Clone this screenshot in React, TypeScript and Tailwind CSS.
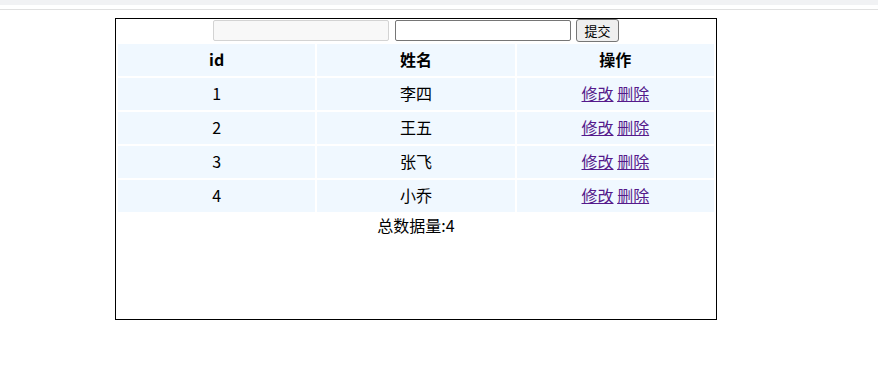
import React from 'react';

const rows = [
  { id: 1, name: '李四' },
  { id: 2, name: '王五' },
  { id: 3, name: '张飞' },
  { id: 4, name: '小乔' },
];

export default function App() {
  return (
    <div className="w-[878px] h-[366px] bg-white relative" style={{ fontFamily: '"Microsoft YaHei", "Noto Sans CJK SC", sans-serif' }}>
      {/* browser chrome remnants */}
      <div className="h-[5px] bg-[#f1f2f4]" />
      <div className="h-[4px]" />
      <div className="h-px bg-[#e0e0e0]" />

      {/* main box */}
      <div className="ml-[115px] mt-[8px] w-[602px] h-[302px] border border-black text-[16px] text-black">
        <div className="flex items-center justify-center h-[23px]">
          <input
            disabled
            className="w-[176px] h-[21px] bg-[#f8f8f8] border border-[#d3d3d3] rounded-[2px]"
          />
          <input className="ml-[6px] w-[176px] h-[21px] bg-white border border-[#767676] rounded-[2px] outline-none" />
          <button className="ml-[5px] w-[43px] h-[23px] bg-[#efefef] border border-[#767676] rounded-[3px] text-[13px] leading-none">
            提交
          </button>
        </div>

        <table className="w-full border-separate border-spacing-[2px] table-fixed">
          <thead>
            <tr>
              <th className="h-[32px] p-0 pb-[2px] bg-[#f0f8ff] font-bold">id</th>
              <th className="h-[32px] p-0 pb-[2px] bg-[#f0f8ff] font-bold">姓名</th>
              <th className="h-[32px] p-0 pb-[2px] bg-[#f0f8ff] font-bold">操作</th>
            </tr>
          </thead>
          <tbody>
            {rows.map((r) => (
              <tr key={r.id}>
                <td className="h-[32px] p-0 pb-[2px] bg-[#f0f8ff] text-center">{r.id}</td>
                <td className="h-[32px] p-0 pb-[2px] bg-[#f0f8ff] text-center">{r.name}</td>
                <td className="h-[32px] p-0 pb-[2px] bg-[#f0f8ff] text-center">
                  <a href="#" className="text-[#551a8b] underline">修改</a>{' '}
                  <a href="#" className="text-[#551a8b] underline">删除</a>
                </td>
              </tr>
            ))}
          </tbody>
        </table>

        <div className="text-center leading-[22px]">总数据量:4</div>
      </div>
    </div>
  );
}
